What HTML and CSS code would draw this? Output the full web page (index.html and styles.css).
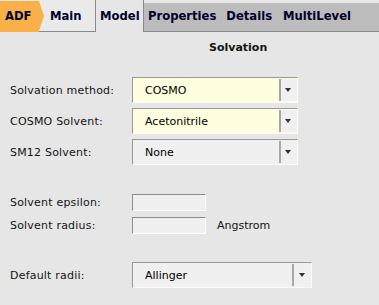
FILE: index.html
```html
<!DOCTYPE html>
<html>
<head>
<meta charset="utf-8">
<link rel="stylesheet" href="styles.css">
</head>
<body>
<div class="tabs">
  <div class="tab tab-adf">ADF</div>
  <div class="tab tab-main">Main</div>
  <div class="tab tab-model">Model</div>
  <div class="tab-rest">
    <span class="tab-item t-prop">Properties</span>
    <span class="tab-item t-det">Details</span>
    <span class="tab-item t-multi">MultiLevel</span>
  </div>
</div>
<div class="title">Solvation</div>
<div class="form">
  <div class="group g-selects">
    <div class="row">
      <span class="label">Solvation method:</span>
      <div class="select yellow"><span class="value">COSMO</span><span class="arrow"></span></div>
    </div>
    <div class="row">
      <span class="label">COSMO Solvent:</span>
      <div class="select yellow"><span class="value">Acetonitrile</span><span class="arrow"></span></div>
    </div>
    <div class="row">
      <span class="label">SM12 Solvent:</span>
      <div class="select"><span class="value">None</span><span class="arrow"></span></div>
    </div>
  </div>
  <div class="group g-inputs">
    <div class="row">
      <span class="label">Solvent epsilon:</span>
      <div class="input"></div>
    </div>
    <div class="row">
      <span class="label">Solvent radius:</span>
      <div class="input"></div>
      <span class="unit">Angstrom</span>
    </div>
  </div>
  <div class="group g-radii">
    <div class="row">
      <span class="label">Default radii:</span>
      <div class="select wide"><span class="value">Allinger</span><span class="arrow"></span></div>
    </div>
  </div>
</div>
</body>
</html>
```
FILE: styles.css
```css
html, body {
  margin: 0;
  padding: 0;
}
body {
  background: #e6e6e6;
  font-family: "DejaVu Sans", Verdana, sans-serif;
  font-size: 11px;
  color: #141414;
  width: 379px;
  height: 305px;
  overflow: hidden;
}
.tabs {
  display: flex;
  height: 32px;
  font-size: 11.6px;
}
.tab {
  font-weight: bold;
  color: #00002e;
  box-sizing: border-box;
  line-height: 31px;
}
.tab-adf {
  position: relative;
  width: 39px;
  height: 31px;
  margin-top: 1px;
  background: #f9b049;
  padding-left: 5px;
  z-index: 1;
}
.tab-adf::after {
  content: "";
  position: absolute;
  left: 39px;
  top: 0;
  border-top: 15.5px solid transparent;
  border-bottom: 15.5px solid transparent;
  border-left: 5px solid #f9b049;
}
.tab-main {
  width: 57px;
  height: 32px;
  background: #eaeaea;
  border-right: 1px solid #8a8a8a;
  border-bottom: 1px solid #8a8a8a;
  padding-left: 11px;
  line-height: 32px;
}
.tab-model {
  width: 48px;
  height: 32px;
  background: #e6e6e6;
  border-right: 1px solid #8a8a8a;
  padding-left: 4px;
  line-height: 32px;
}
.tab-rest {
  flex: 1;
  margin-top: 3px;
  height: 29px;
  box-sizing: border-box;
  background: #bcbcbc;
  border-bottom: 1px solid #8a8a8a;
  display: flex;
  font-weight: bold;
  color: #00002e;
  line-height: 27px;
  padding-left: 4px;
}
.tab-item {
  margin-right: 10px;
}
.t-det {
  margin-right: 11px;
}
.title {
  font-weight: bold;
  color: #141414;
  padding-left: 209px;
  padding-top: 9px;
  line-height: 14px;
  margin-bottom: 22px;
}
.form {
  padding-left: 10px;
}
.group {
  display: flex;
  flex-direction: column;
}
.g-selects {
  gap: 5px;
}
.g-inputs {
  gap: 6px;
  margin-top: 29px;
}
.g-radii {
  margin-top: 28px;
}
.row {
  display: flex;
  align-items: center;
}
.label {
  width: 122px;
  flex: none;
  letter-spacing: 0.2px;
}
.select {
  display: flex;
  width: 166px;
  height: 26px;
  box-sizing: border-box;
  background: #f0f0f0;
  border-top: 1px solid #999;
  border-left: 1px solid #999;
  border-right: 1px solid #fbfbfb;
  border-bottom: 1px solid #fbfbfb;
}
.select.yellow {
  background: #ffffdf;
}
.select.wide {
  width: 180px;
}
.value {
  flex: 1;
  padding-left: 12px;
  line-height: 25px;
  color: #000;
}
.arrow {
  width: 16px;
  flex: none;
  background: #f0f0f0;
  border-left: 2px solid #a8a8a8;
  margin: 1px 0;
  position: relative;
}
.select.wide .arrow {
  width: 17px;
}
.arrow::after {
  content: "";
  position: absolute;
  left: 50%;
  top: 50%;
  margin-left: -4px;
  margin-top: -2px;
  border-left: 3.5px solid transparent;
  border-right: 3.5px solid transparent;
  border-top: 4px solid #333;
}
.input {
  width: 74px;
  height: 17px;
  box-sizing: border-box;
  background: #f0f0f0;
  border-top: 1px solid #8c8c8c;
  border-left: 1px solid #8c8c8c;
  border-right: 1px solid #fff;
  border-bottom: 1px solid #fff;
}
.unit {
  margin-left: 11px;
}
```
